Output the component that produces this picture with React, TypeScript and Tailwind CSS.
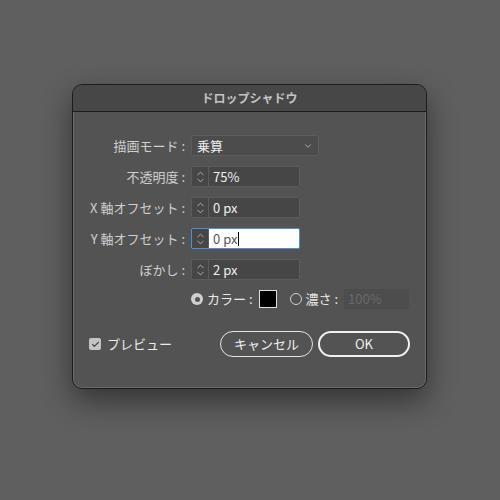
import { ChevronDown, ChevronUp, Check } from "lucide-react";

const font = { fontFamily: '"Noto Sans CJK JP", "Noto Sans", sans-serif' };

const Spinner = ({ value, focused }: { value: string; focused?: boolean }) => (
  <div
    className={
      focused
        ? "flex h-[21px] w-[109px] items-stretch rounded-[2px] border border-[#4a90d9] bg-white"
        : "flex h-[21px] w-[109px] items-stretch rounded-[2px] border border-[#5c5c5c] bg-[#464646]"
    }
  >
    <div
      className={
        focused
          ? "flex w-[17px] flex-col items-center justify-center border-r border-[#5c5c5c] bg-[#464646] text-[#d8d8d8]"
          : "flex w-[17px] flex-col items-center justify-center border-r border-[#5c5c5c] text-[#d8d8d8]"
      }
    >
      <ChevronUp size={11} strokeWidth={1.5} className="-mb-[2px]" />
      <ChevronDown size={11} strokeWidth={1.5} className="-mt-[2px]" />
    </div>
    <div
      className={
        focused
          ? "flex items-center pl-[4px] text-[13px] text-[#555]"
          : "flex items-center pl-[4px] text-[13px] text-[#f0f0f0]"
      }
    >
      {value}
      {focused && <span className="ml-[1px] h-[14px] w-[1px] bg-black" />}
    </div>
  </div>
);

const Row = ({ label, children }: { label: string; children: React.ReactNode }) => (
  <div className="flex items-center">
    <div className="w-[102px] whitespace-nowrap pr-[6px] text-right text-[13px] text-[#cfcfcf]">{label} :</div>
    {children}
  </div>
);

export default function App() {
  return (
    <div className="h-[500px] w-[500px] bg-[#5f5f5f] pl-[72px] pt-[84px]" style={font}>
      <div className="flex h-[305px] w-[355px] flex-col overflow-hidden rounded-[10px] border border-[#1c1c1c] bg-[#535353] shadow-[0_12px_30px_rgba(0,0,0,0.45)]">
        <div className="flex h-[27px] shrink-0 items-center justify-center border-b border-[#1c1c1c] bg-[#474747] text-[12px] font-semibold text-[#c4c4c4]">
          ドロップシャドウ
        </div>
        <div className="flex flex-1 flex-col rounded-b-[9px] border-x border-b border-[#6a6a6a] px-[15px] pt-[23px]">
          <div className="flex flex-col gap-[10px]">
            <Row label="描画モード">
              <div className="flex h-[21px] w-[128px] items-center justify-between rounded-[2px] border border-[#5c5c5c] bg-[#4c4c4c] pl-[5px] pr-[5px] text-[13px] text-[#f0f0f0]">
                <span>乗算</span>
                <ChevronDown size={10} strokeWidth={1.6} className="text-[#d8d8d8]" />
              </div>
            </Row>
            <Row label="不透明度">
              <Spinner value="75%" />
            </Row>
            <Row label="X 軸オフセット">
              <Spinner value="0 px" />
            </Row>
            <Row label="Y 軸オフセット">
              <Spinner value="0 px" focused />
            </Row>
            <Row label="ぼかし">
              <Spinner value="2 px" />
            </Row>
          </div>
          <div className="mt-[9px] flex items-center whitespace-nowrap pl-[102px] text-[13px] text-[#e8e8e8]">
            <span className="flex h-[12px] w-[12px] items-center justify-center rounded-full bg-[#d0d0d0]">
              <span className="h-[5px] w-[5px] rounded-full bg-[#555]" />
            </span>
            <span className="ml-[4px]">カラー :</span>
            <span className="ml-[6px] h-[18px] w-[18px] border border-[#e0e0e0] bg-black" />
            <span className="ml-[13px] h-[12px] w-[12px] rounded-full border border-[#d0d0d0]" />
            <span className="ml-[4px]">濃さ :</span>
            <span className="ml-[6px] flex h-[20px] w-[65px] items-center rounded-[2px] bg-[#4d4d4d] pl-[4px] text-[#6a6a6a]">
              100%
            </span>
          </div>
          <div className="mt-[22px] flex items-center">
            <span className="flex h-[12px] w-[12px] items-center justify-center rounded-[2px] bg-[#c4c4c4] text-[#444]">
              <Check size={9} strokeWidth={3} />
            </span>
            <span className="ml-[6px] text-[13px] text-[#ececec]">プレビュー</span>
            <div className="ml-auto flex gap-[5px]">
              <button className="flex h-[26px] w-[93px] items-center justify-center rounded-full border border-[#e6e6e6] text-[13px] text-[#f0f0f0]">
                キャンセル
              </button>
              <button className="flex h-[26px] w-[92px] items-center justify-center rounded-full border-2 border-[#f0f0f0] text-[13px] text-[#f0f0f0]">
                OK
              </button>
            </div>
          </div>
        </div>
      </div>
    </div>
  );
}
